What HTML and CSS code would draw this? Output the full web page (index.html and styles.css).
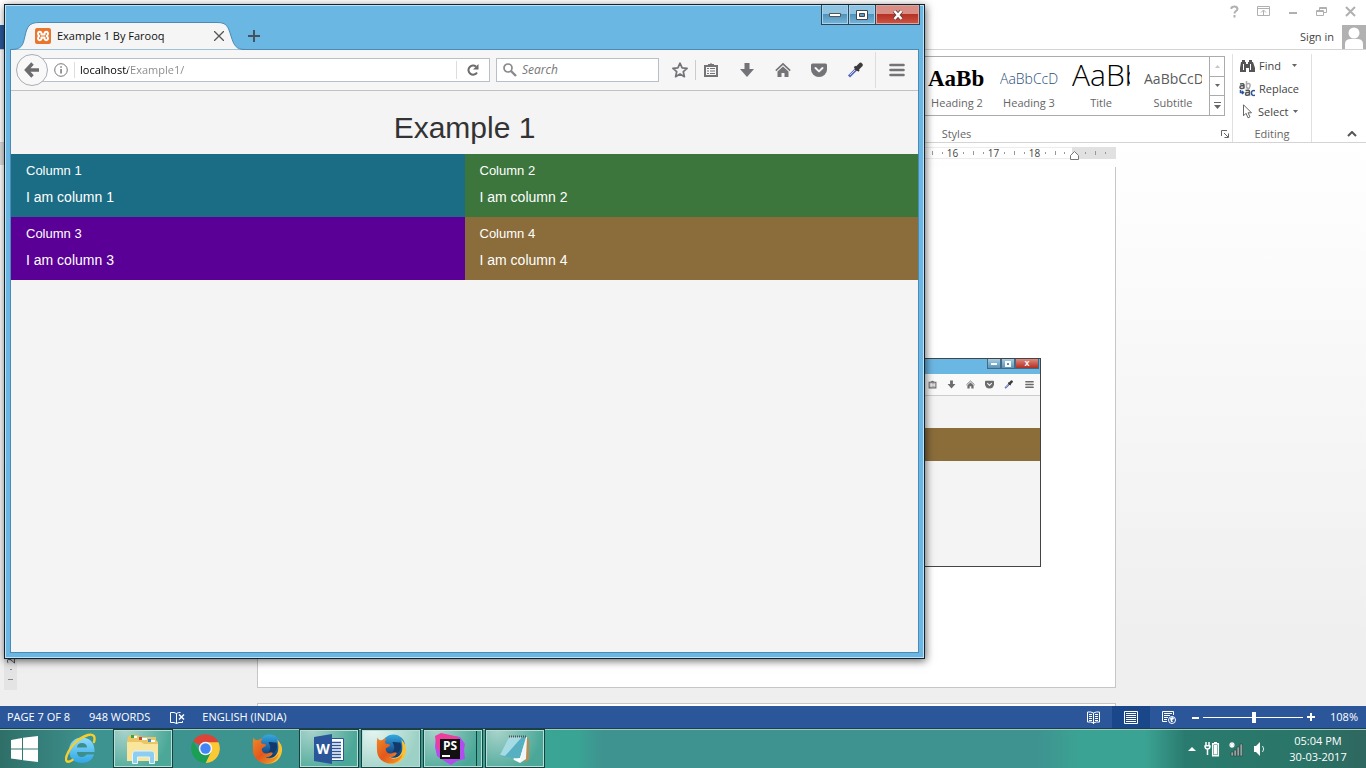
FILE: index.html
```html
<!DOCTYPE html>
<html lang="en">
<head>
<meta charset="UTF-8">
<meta name="viewport" content="width=device-width, initial-scale=1.0">
<title>Example 1 By Farooq</title>
<link rel="stylesheet" href="styles.css">
</head>
<body>
<!-- shared icons -->
<svg class="defs" width="0" height="0">
  <defs>
    <symbol id="i-list" viewBox="0 0 16 16"><path fill="none" stroke="currentColor" stroke-width="2" d="M2 4h12v10H2z"/><path fill="currentColor" d="M5 4V2h2l1-1 1 1h2v2zM4 6h2v1H4zm3 0h5v1H7zM4 8.500h2v1H4zm3 0h5v1H7zM4 11h2v1H4zm3 0h5v1H7z"/></symbol>
    <symbol id="i-down" viewBox="0 0 16 16"><path fill="currentColor" d="M5.500 1h5v6H15l-7 8-7-8h4.500z"/></symbol>
    <symbol id="i-home" viewBox="0 0 16 16"><path fill="none" stroke="currentColor" stroke-width="1.600" d="M.8 8.600L8 1.800l7.200 6.800"/><path fill="currentColor" d="M8 4.500l5.500 5V15h-4v-4h-3v4h-4V9.500z"/></symbol>
    <symbol id="i-pocket" viewBox="0 0 16 16"><path fill="currentColor" d="M1.500 1.500h13Q16 1.500 16 3v4.500a8 7.500 0 0 1-16 0V3q0-1.500 1.500-1.500z"/><path fill="none" stroke="#f5f5f5" stroke-width="2" stroke-linecap="round" stroke-linejoin="round" d="M4.500 6L8 9.400 11.500 6"/></symbol>
    <symbol id="i-dropper" viewBox="0 0 16 16"><path d="M2 14.500L9.500 7" stroke="#5a68b8" stroke-width="3"/><path d="M3 13l6.500-6.500" stroke="#c9d2f5" stroke-width="1"/><path d="M7.500 4.500l4.500 4.500" stroke="#333" stroke-width="2"/><path d="M10 6.500l3.500-3.500" stroke="#3b3b3b" stroke-width="4.500" stroke-linecap="round"/></symbol>
    <symbol id="i-menu" viewBox="0 0 16 16"><path stroke="currentColor" stroke-width="2.600" stroke-linecap="round" d="M1.500 3h13M1.500 8h13M1.500 13h13"/></symbol>
    <linearGradient id="fox" x1="0" y1="0" x2="1" y2="1"><stop offset="0" stop-color="#ef8a25"/><stop offset=".5" stop-color="#e4571c"/><stop offset="1" stop-color="#f6a327"/></linearGradient>
    <linearGradient id="globe" x1="0" y1="0" x2="0" y2="1"><stop offset="0" stop-color="#35a9e0"/><stop offset=".6" stop-color="#1c5f9f"/><stop offset="1" stop-color="#123567"/></linearGradient>
    <linearGradient id="ie" x1="0" y1="0" x2="0" y2="1"><stop offset="0" stop-color="#8edcfb"/><stop offset="1" stop-color="#2fa6e6"/></linearGradient>
    <symbol id="i-firefox" viewBox="0 0 32 32">
      <circle cx="18" cy="13" r="12" fill="url(#globe)"/>
      <path fill="#133a6c" d="M17 9c3-1 5 1 8 0 2 4 1 9-3 11l-5-1c3-3 2-6 0-10z"/>
      <path fill="#f8c234" d="M26 6c4 4 5.500 8 5 12-1 8-7 13-14 13-5 0-9-2-12-6l9 1c7 1 12-3 13-9 .5-4 0-7-1-11z"/>
      <path fill="url(#fox)" d="M1.500 4c1 2 2 3 4 3 2-1 4-1.500 6-1.500-2 1.500-2.500 3-2 4.500 1 1 4 .5 5 1.500 0 2-3 2.500-4.500 4 0 4 3 6 6.500 5 2-.5 3-1.500 5-.5-1 3-4 5-8 4 4 4 11 2 14-3-1 6-6 10-12 10C7 31 1 25 1 17c0-5-.5-9 .5-13z"/>
    </symbol>
  </defs>
</svg>

<div class="desktop">
  <!-- word processor -->
  <section class="word">
    <div class="word-title">
      <button aria-label="Help"><svg width="11" height="13" viewBox="0 0 11 13"><path fill="none" stroke="currentColor" stroke-width="2" d="M2.500 4V2.500Q3 1.500 5.500 1.500t3 2.500q0 1-1.500 2T5.500 8.500M5.500 10v2.500"/></svg></button>
      <button aria-label="Ribbon display options"><svg width="13" height="12" viewBox="0 0 13 12"><path fill="none" stroke="currentColor" d="M.5 1.500h12v9H.5zM.5 3.500h12M6.500 10V5.500M4 7.500L6.500 5 9 7.500"/></svg></button>
      <button aria-label="Minimize"><svg width="10" height="12" viewBox="0 0 10 12"><path stroke="currentColor" stroke-width="2" d="M1 8h8"/></svg></button>
      <button aria-label="Restore"><svg width="11" height="11" viewBox="0 0 11 11"><path fill="none" stroke="currentColor" d="M.5 4.500h7v5h-7zM.5 5.500h7M3.500 4V1.500h7v5H8M3.500 2.500h7"/></svg></button>
      <button aria-label="Close"><svg width="11" height="11" viewBox="0 0 11 11"><path stroke="currentColor" stroke-width="2" d="M1 1l9 9M10 1l-9 9"/></svg></button>
    </div>
    <div class="word-tabs">
      <span class="file-tab"></span>
      <a class="sign-in" href="#">Sign in</a>
      <svg class="avatar" width="24" height="24" viewBox="0 0 24 24"><path fill="#b1b1b1" d="M0 0h24v24H0z"/><circle cx="12" cy="8" r="5.500" fill="#fff"/><path fill="#fff" d="M3 24v-5q0-5 6-5h6q6 0 6 5v5z"/></svg>
    </div>
    <div class="ribbon">
      <div class="group styles-group">
        <div class="gallery">
          <button class="style-item"><span class="sample sample-h2">AaBb</span>Heading 2</button>
          <button class="style-item"><span class="sample sample-h3">AaBbCcD</span>Heading 3</button>
          <button class="style-item"><span class="sample sample-title">AaBb</span>Title</button>
          <button class="style-item"><span class="sample sample-sub">AaBbCcD</span>Subtitle</button>
          <div class="gallery-nav">
            <button aria-label="Previous row" class="off"><svg width="7" height="4" viewBox="0 0 7 4"><path fill="currentColor" d="M1 4l2.500-3L6 4z"/></svg></button>
            <button aria-label="Next row"><svg width="7" height="4" viewBox="0 0 7 4"><path fill="currentColor" d="M1 0l2.500 3L6 0z"/></svg></button>
            <button aria-label="More"><svg width="7" height="8" viewBox="0 0 7 8"><path fill="currentColor" d="M0 0h7v1H0zM0 3h7L3.500 7z"/></svg></button>
          </div>
        </div>
        <div class="group-label">Styles
          <svg class="launcher" width="8" height="8" viewBox="0 0 8 8"><path fill="none" stroke="#666" d="M.5 6V.5H6M3 3l4 4M7.500 3.500v4h-4"/></svg>
        </div>
      </div>
      <div class="group edit-group">
        <div class="commands">
          <button><svg width="16" height="14" viewBox="0 0 16 14"><path fill="#555" d="M3 1h3v2h1v2h2V3h1V1h3v2h1l2 6v4h-6V9H7v4H1V9l1-6h1z"/><path stroke="#fff" d="M4.500 5v6M11.500 5v6"/></svg>Find <svg class="drop" width="7" height="4" viewBox="0 0 7 4"><path fill="#666" d="M1 0h5L3.500 3z"/></svg></button>
          <button><svg width="16" height="16" viewBox="0 0 16 16"><g fill="none" stroke-width="1.500"><path stroke="#555" d="M1 3q4-1 4 1v3.500M5 4.800H2.500q-1.500 0-1.500 1.500t2 1.200q2 0 2-1.500"/><path stroke="#aaa" d="M7.500 0v7.500M7.500 4q0-1.500 2-1.500T11 5t-1.500 2.500-2-1.500"/><path stroke="#555" d="M6.500 9.500q4-1 4 1v4M10.500 11.500H8q-1.500 0-1.500 1.500t2 1.200q2 0 2-1.500"/><path stroke="#2b579a" d="M16 9.700q-3.500-.7-3.500 2.300t3.500 2.300M1.500 9v2.500h3M3 10l1.500 1.500L3 13"/></g></svg>Replace</button>
          <button><svg width="16" height="15" viewBox="0 0 16 15"><path fill="#fff" stroke="#666" d="M4.500.8v11l2.500-2.500 2 4.500 2-1-2-4h3.500z"/></svg>Select<svg class="drop" width="7" height="4" viewBox="0 0 7 4"><path fill="#666" d="M1 0h5L3.500 3z"/></svg></button>
        </div>
        <div class="group-label">Editing</div>
      </div>
      <button class="collapse" aria-label="Collapse the ribbon"><svg width="10" height="6" viewBox="0 0 10 6"><path fill="none" stroke="#555" stroke-width="2" d="M1 5l4-4 4 4"/></svg></button>
    </div>

    <div class="workspace">
      <div class="side-ruler">
        <span class="corner"></span>
        <div class="side-scale"><span>2</span><i class="dot"></i><i class="dash"></i></div>
      </div>
      <div class="pages">
        <div class="ruler">
          <div class="ruler-scale">
            <span>16</span><span>17</span><span>18</span>
          </div>
          <div class="ruler-end"><i></i><i></i><i></i></div>
          <svg class="indent" width="9" height="9" viewBox="0 0 9 9"><path fill="#fff" stroke="#777" d="M.5 4.500l4-4 4 4v4h-8z"/></svg>
        </div>
        <div class="page">
          <div class="figure">
            <div class="figure-title"><span></span><span></span><span class="red">x</span></div>
            <div class="figure-bar">
              <svg><use href="#i-list"/></svg><svg><use href="#i-down"/></svg><svg><use href="#i-home"/></svg><svg><use href="#i-pocket"/></svg><svg><use href="#i-dropper"/></svg><svg class="figure-menu"><use href="#i-menu"/></svg>
            </div>
            <div class="figure-band"></div>
          </div>
        </div>
        <div class="page next"></div>
      </div>
    </div>

    <div class="status">
      <span class="pages-count">PAGE 7 OF 8</span>
      <span>948 WORDS</span>
      <svg class="proof" width="15" height="13" viewBox="0 0 15 13"><path fill="none" stroke="#fff" d="M6.500 2.500q-2-1.500-6-1v10q4-.5 6 1zV13M6.500 2.500q1.500-1.300 4-1M6.500 12.500q2-1.500 6-1V10"/><path stroke="#fff" stroke-width="1.500" d="M9 3.500l5 5M14 3.500l-5 5"/></svg>
      <span>ENGLISH (INDIA)</span>
      <div class="views">
        <button aria-label="Read mode"><svg width="13" height="13" viewBox="0 0 13 13"><path fill="none" stroke="#fff" d="M6.500 2Q4 .5.500 1v10q3.500-.5 6 1 2.500-1.500 6-1V1Q9 .5 6.500 2zV13M2 3.500h3M2 5.500h3M2 7.500h3M2 9.500h3M8 3.500h3M8 5.500h3M8 7.500h3M8 9.500h3"/></svg></button>
        <button class="on" aria-label="Print layout"><svg width="14" height="13" viewBox="0 0 14 13"><path fill="none" stroke="#fff" d="M.5.500h13v12H.5zM2 2.500h10M2 4.500h10M2 6.500h10M2 8.500h10M2 10.500h10"/></svg></button>
        <button aria-label="Web layout"><svg width="14" height="13" viewBox="0 0 14 13"><path fill="none" stroke="#fff" d="M11.500 4V.5H.5v10H5M2 2.500h8M2 4.500h6M2 6.500h4M2 8.500h3"/><circle cx="10" cy="9" r="3.500" fill="#2b579a" stroke="#fff"/><path fill="#fff" d="M8 7l3-1 1 2-2 1 1 2H9z"/></svg></button>
      </div>
      <div class="zoomer">
        <svg width="7" height="9" viewBox="0 0 7 9"><path stroke="#fff" stroke-width="2" d="M0 5h7"/></svg>
        <input type="range" min="0" max="100" value="51" aria-label="Zoom level">
        <svg width="8" height="8" viewBox="0 0 8 8"><path stroke="#fff" stroke-width="2" d="M0 4h8M4 0v8"/></svg>
      </div>
      <span class="percent">108%</span>
    </div>
  </section>

  <!-- taskbar -->
  <nav class="taskbar">
    <button class="start" aria-label="Start"><svg width="27" height="26" viewBox="0 0 27 26"><path fill="#fff" d="M0 4l11-2v10.500H0zM12 1.800L27 0v12.500H12zM0 13.500h11V24L0 22.500zM12 13.500h15V26l-15-1.800z"/></svg></button>
    <button class="task" aria-label="Internet Explorer"><svg width="32" height="32" viewBox="0 0 32 32"><path fill="url(#ie)" fill-rule="evenodd" d="M17 4.500c7.500 0 12.500 5 12.500 13v1.500H12c0 3 2 5 5 5 2 0 3.500-1 4.500-2.500h7.500C27.500 26.500 23 30 17 30 9 30 4 24.500 4 17.500S9 4.500 17 4.500zM12 14.500h10c0-3-2-4.500-5-4.500s-5 1.500-5 4.500z"/><path fill="none" stroke="#f6cf2e" stroke-width="2.400" stroke-linecap="round" d="M7.500 27C2 30.500-.5 28.500 2 22 5 13.500 14 4.500 23 2c6-1.500 7.500 2 6 7"/></svg></button>
    <button class="task open" aria-label="File Explorer"><svg width="34" height="32" viewBox="0 0 34 32"><path fill="#e9c767" d="M2 4l2-2h8l2 2h16v3l2 2v18H1V8z"/><path fill="#fff" d="M5 3h6v2H5zM14 5h7v2h-7zM22 7h7v2h-7z"/><path fill="#3da639" d="M5 2h3v3H5z"/><path fill="#d4472d" d="M13 4h3v3h-3z"/><path fill="#3b8fd0" d="M22 6h3v3h-3z"/><path fill="#fae59c" d="M1 9h14l3 2h14v17H1z"/><path fill="#8dcdf0" stroke="#dff5ff" d="M6.500 30.500V20l2-2h18l2 2v10.500h-5V24h-12v6.500z"/></svg></button>
    <button class="task" aria-label="Chrome"><svg width="29" height="29" viewBox="0 0 28 28"><path fill="#db4437" d="M14 14L2 7a14 14 0 0 1 24.500 1z"/><path fill="#fcc934" d="M14 14V8h12.500A14 14 0 0 1 14 28l5-11z"/><path fill="#1a9f55" d="M14 14l5 4-5 10A14 14 0 0 1 2 7l6 10z"/><circle cx="14" cy="14" r="6.500" fill="#f4f4f4"/><circle cx="14" cy="14" r="5" fill="#4385f4"/></svg></button>
    <button class="task" aria-label="Firefox"><svg width="31" height="32"><use href="#i-firefox"/></svg></button>
    <button class="task open" aria-label="Word"><svg width="30" height="30" viewBox="0 0 30 30"><path fill="#fff" stroke="#2b579a" d="M14 4.500h15.500v22H14z"/><path stroke="#2b579a" stroke-width="1.500" d="M18 8.500h9M18 11.500h9M18 14.500h9M18 17.500h9M18 20.500h9M18 23.500h9"/><path fill="#2b579a" d="M0 3l18-3v30L0 27z"/><text x="9" y="20" text-anchor="middle" font-size="14" class="logo-text">W</text></svg></button>
    <button class="task open active" aria-label="Firefox window"><svg width="31" height="32"><use href="#i-firefox"/></svg></button>
    <button class="task open stacked" aria-label="PhpStorm"><svg width="32" height="32" viewBox="0 0 32 32"><path fill="#b14df0" d="M2 3l10-1 14 2 5 7-1 6 1 9-8 2-6 4-10-6-4-3-2-9z"/><path fill="#ee3d9c" d="M1 3l6-3 9 2 9 2-8 8-9 10-5-7z"/><path fill="#111" d="M6 6h20v20H6z"/><path fill="#fff" d="M8 22h8v2H8z"/><text x="16" y="17" text-anchor="middle" font-size="12" class="logo-text">PS</text></svg></button>
    <button class="task open" aria-label="Notepad"><svg width="34" height="32" viewBox="0 0 34 32"><path fill="#b98c52" d="M28 4l3 2v20l-4 4z"/><path fill="#f0f5f5" d="M11 4h18l-1 22-6 4-6-3z"/><path fill="#57b0c2" d="M11 4h17l-6 22-20-3z"/><path fill="#a6dbe4" d="M11 4h13L7 23l-5-1z"/><path fill="#fff" d="M27 8l-5 21-7-3 7-1z"/><path stroke="#555" stroke-dasharray="1 1" stroke-width="2" d="M11 3.500h18"/></svg></button>
    <div class="tray">
      <svg width="8" height="5" viewBox="0 0 8 5"><path fill="#fff" d="M0 5l4-4 4 4z"/></svg>
      <svg width="16" height="16" viewBox="0 0 16 16"><path fill="none" stroke="#fff" stroke-width="1.500" d="M2 1v3M5 1v3M.5 4.700h6M1 5q0 3 2.500 3T6 5M3.500 8v6"/><path fill="#2a7568" stroke="#fff" stroke-width="1.500" d="M8.700 2.700h5.600v12H8.700z"/><path fill="#fff" d="M10 4h3v9.500h-3zM10 1h3v1h-3z"/></svg>
      <svg width="16" height="16" viewBox="0 0 16 16"><path fill="#8fa5a1" stroke="#33423f" stroke-width=".6" d="M3 11h2.500v4H3zM6 9h2.500v6H6zM9 6h2.500v9H9zM12 3h2.500v12H12z"/><path stroke="#fff" stroke-width="1.200" d="M4 1v6M1 4h6M2 2l4 4M6 2L2 6"/></svg>
      <svg width="16" height="16" viewBox="0 0 16 16"><path fill="#fff" d="M2 5h2l4-4v14l-4-4H2z"/><path fill="none" stroke="#dff0ed" d="M10.500 5q2.500 3 0 6"/></svg>
    </div>
    <div class="clock"><span>05:04 PM</span><span>30-03-2017</span></div>
  </nav>

  <!-- browser window -->
  <main class="browser">
    <div class="win-buttons">
      <button aria-label="Minimize window"><svg width="12" height="6" viewBox="0 0 12 6"><path fill="#fff" stroke="#555" d="M.5 1.500h11v3H.5z"/></svg></button>
      <button aria-label="Maximize window"><svg width="12" height="10" viewBox="0 0 12 10"><path fill="#fff" stroke="#445" d="M.5.500h11v9H.5z"/><path fill="#5f9dc6" stroke="#445" d="M3.500 3.500h5v3h-5z"/></svg></button>
      <button class="shut" aria-label="Close window"><svg width="12" height="10" viewBox="0 0 12 10"><path stroke="#5d3a3a" stroke-width="4" d="M2.500 1l7 8M9.500 1l-7 8"/><path stroke="#fff" stroke-width="2.500" d="M2.500 1l7 8M9.500 1l-7 8"/></svg></button>
    </div>
    <div class="tabs">
      <div class="tab">
        <svg class="tab-shape" width="234" height="28" viewBox="0 0 234 28"><path fill="#f5f5f5" stroke="#4a8ab5" d="M0 27.500C11 27.500 12 23 14 14S18 .5 28 .5h178c10 0 11 4 14 13.500s5 13.500 14 13.500"/></svg>
        <svg width="16" height="16" viewBox="0 0 16 16"><rect width="16" height="16" rx="2" fill="#e8762d"/><path fill="none" stroke="#fff" stroke-width="2" stroke-linejoin="round" d="M6.500 6.400V5.200A1.800 1.800 0 0 0 3 5.200Q3 7 4.200 8 3 9 3 10.800A1.800 1.800 0 0 0 6.500 10.800V9.600h3v1.200A1.800 1.800 0 0 0 13 10.800Q13 9 11.800 8 13 7 13 5.200A1.800 1.800 0 0 0 9.500 5.200v1.200z"/></svg>
        <span>Example 1 By Farooq</span>
        <button aria-label="Close tab"><svg width="10" height="10" viewBox="0 0 10 10"><path stroke="#555" stroke-width="1.300" d="M0 0l10 10M10 0L0 10"/></svg></button>
      </div>
      <button class="new-tab" aria-label="New tab"><svg width="12" height="12" viewBox="0 0 12 12"><path stroke="#44545f" stroke-width="2" d="M0 6h12M6 0v12"/></svg></button>
    </div>
    <div class="client">
      <div class="toolbar">
        <button class="back" aria-label="Back"><svg width="16" height="16" viewBox="0 0 16 16"><path fill="none" stroke="#6c6c6f" stroke-width="3.400" d="M8.500 1.500L2.500 8l6 6.500M3 8h12"/></svg></button>
        <div class="url">
          <svg width="14" height="14" viewBox="0 0 14 14"><circle cx="7" cy="7" r="6.300" fill="none" stroke="#777"/><path fill="#777" d="M6.300 6h1.500v4.500H6.300zM6.300 3.200h1.500v1.500H6.300z"/></svg>
          <input type="text" value="localhost/Example1/" aria-label="Address">
          <button aria-label="Reload"><svg width="12" height="12" viewBox="0 0 12 12"><path fill="none" stroke="#6c6c6f" stroke-width="2" d="M10 8.500A4.600 4.600 0 1 1 9 2.500"/><path fill="#6c6c6f" d="M11.500 0v5.500H6z"/></svg></button>
        </div>
        <div class="search">
          <svg width="14" height="14" viewBox="0 0 14 14"><circle cx="5" cy="5" r="4" fill="none" stroke="#8a8a8a" stroke-width="1.700"/><path stroke="#8a8a8a" stroke-width="2.400" d="M8 8l5 5"/></svg>
          <input type="text" placeholder="Search" aria-label="Search">
        </div>
        <div class="tools">
          <button class="star" aria-label="Bookmark"><svg width="16" height="16" viewBox="0 0 16 16"><path fill="none" stroke="currentColor" stroke-width="1.700" stroke-linejoin="round" d="M8 1.200l2.100 4.600 5 .5-3.800 3.400 1.100 5L8 12.100l-4.400 2.600 1.100-5L.9 6.300l5-.5z"/></svg></button>
          <button aria-label="Bookmarks list"><svg><use href="#i-list"/></svg></button>
          <button aria-label="Downloads"><svg><use href="#i-down"/></svg></button>
          <button aria-label="Home"><svg><use href="#i-home"/></svg></button>
          <button aria-label="Pocket"><svg><use href="#i-pocket"/></svg></button>
          <button aria-label="Eyedropper"><svg><use href="#i-dropper"/></svg></button>
          <button class="menu" aria-label="Menu"><svg><use href="#i-menu"/></svg></button>
        </div>
      </div>
      <div class="content">
        <h2>Example 1</h2>
        <div class="columns">
          <div class="col col1"><h3>Column 1</h3><p>I am column 1</p></div>
          <div class="col col2"><h3>Column 2</h3><p>I am column 2</p></div>
          <div class="col col3"><h3>Column 3</h3><p>I am column 3</p></div>
          <div class="col col4"><h3>Column 4</h3><p>I am column 4</p></div>
        </div>
      </div>
    </div>
  </main>
</div>
</body>
</html>
```

FILE: styles.css
```css
* {
  box-sizing: border-box;
}
body {
  margin: 0;
  overflow: hidden;
  font-family: "Open Sans", "Noto Sans", sans-serif;
  font-size: 11px;
  line-height: 16px;
  color: #444;
}
button {
  display: flex;
  align-items: center;
  justify-content: center;
  margin: 0;
  padding: 0;
  border: 0;
  background: none;
  font: inherit;
  color: inherit;
}
svg {
  display: block;
  flex-shrink: 0;
}
input {
  min-width: 0;
  margin: 0;
  padding: 0;
  border: 0;
  outline: 0;
  background: none;
  font: inherit;
}
.defs { position: absolute; }
.desktop {
  position: relative;
  display: flex;
  flex-direction: column;
  height: 100vh;
}

/* word processor */
.word {
  flex: 1;
  min-height: 0;
  display: flex;
  flex-direction: column;
  background: #fff;
}
.word-title {
  display: flex;
  justify-content: flex-end;
  height: 25px;
  padding-right: 1px;
  color: #b0b0b0;
}
.word-title button { width: 29px; height: 22px; }
.word-tabs {
  display: flex;
  align-items: center;
  height: 25px;
  border-bottom: 1px solid #d4d4d4;
}
.file-tab {
  width: 56px;
  height: 24px;
  background: #2b579a;
}
.sign-in {
  margin-left: auto;
  margin-right: 8px;
  color: #444;
  text-decoration: none;
}
.ribbon {
  display: flex;
  justify-content: flex-end;
  height: 93px;
  padding-top: 4px;
  border-bottom: 1px solid #d4d4d4;
}
.group {
  display: flex;
  flex-direction: column;
  justify-content: space-between;
  border-right: 1px solid #e1e1e1;
}
.styles-group { width: 550px; padding: 2px 7px 0 5px; }
.gallery {
  display: flex;
  justify-content: flex-end;
  height: 60px;
  border: 1px solid #ababab;
}
.style-item {
  flex-direction: column;
  justify-content: flex-end;
  width: 72px;
  padding-bottom: 4px;
  color: #666;
}
.sample {
  display: flex;
  align-items: center;
  width: 58px;
  height: 28px;
  margin-bottom: 2px;
  overflow: hidden;
}
.sample-h2 {
  font: bold 23px "Liberation Serif", serif;
  color: #000;
}
.sample-h3 {
  font-size: 14px;
  font-weight: 300;
  color: #1f4d78;
}
.sample-title {
  align-items: flex-start;
  font-size: 30px;
  font-weight: 300;
  line-height: 20px;
  color: #000;
}
.sample-sub {
  font-size: 14px;
  color: #5a5a5a;
}
.gallery-nav {
  display: flex;
  flex-direction: column;
  width: 15px;
  border-left: 1px solid #ababab;
  color: #666;
}
.gallery-nav button { flex: 1; }
.gallery-nav button + button { border-top: 1px solid #ababab; }
.gallery-nav .off { color: #c6c6c6; }
.group-label {
  position: relative;
  text-align: center;
  color: #666;
}
.launcher {
  position: absolute;
  right: -4px;
  bottom: 4px;
}
.edit-group { width: 79px; }
.commands button {
  height: 23px;
  padding-left: 6px;
  gap: 4px;
}
.commands .drop { margin-left: 6px; }
.commands button:last-child { gap: 3px; }
.commands button:last-child .drop { margin-left: 1px; }
.collapse {
  align-self: flex-end;
  width: 54px;
  height: 16px;
  padding-left: 26px;
}

.workspace {
  flex: 1;
  min-height: 0;
  display: flex;
  background: linear-gradient(#fff, #efefef 500px);
}
.side-ruler {
  display: flex;
  flex-direction: column;
  width: 17px;
}
.corner {
  height: 22px;
  background: #dcdcdc;
}
.side-scale {
  flex: 1;
  display: flex;
  flex-direction: column;
  align-items: center;
  justify-content: flex-end;
  gap: 9px;
  margin: 0 0 16px 4px;
  padding-bottom: 10px;
  background: #e4e4e4;
  font-size: 10px;
  line-height: 12px;
}
.side-scale span {
  margin-bottom: -4px;
  writing-mode: vertical-rl;
  transform: rotate(180deg);
}
.side-scale i { height: 1px; background: #888; }
.dot { width: 2px; }
.dash { width: 5px; }
.pages {
  flex: 1;
  display: flex;
  flex-direction: column;
  align-items: center;
  padding: 4px 10px 0 0;
}
.ruler {
  position: relative;
  display: flex;
  width: 859px;
  height: 12px;
  margin-bottom: 8px;
  font-size: 10px;
  line-height: 12px;
}
.ruler-scale {
  flex: 1;
  display: flex;
  justify-content: flex-end;
  padding-right: 17px;
  box-shadow: inset 0 1px #ececec, inset 0 -1px #ececec;
  background: linear-gradient(#999, #999) right 16px top 4px / 1px 4px no-repeat, linear-gradient(#999, #999) right 7px top 5px / 1px 2px no-repeat, #fff;
}
.ruler-scale span {
  width: 41px;
  text-align: center;
  background: linear-gradient(#999, #999) 0 4px / 1px 4px no-repeat, linear-gradient(#999, #999) 10px 5px / 1px 2px no-repeat, linear-gradient(#999, #999) 31px 5px / 1px 2px no-repeat;
}
.ruler-end {
  display: flex;
  align-items: center;
  gap: 9px;
  width: 44px;
  padding-left: 13px;
  background: #e1e1e1;
}
.ruler-end i {
  width: 1px;
  height: 2px;
  background: #999;
}
.ruler-end i:nth-child(2) { height: 4px; }
.indent {
  position: absolute;
  right: 37px;
  bottom: -1px;
}
.page {
  width: 859px;
  flex: 1;
  display: flex;
  justify-content: flex-end;
  align-items: flex-start;
  padding: 191px 74px 0 0;
  border: 1px solid #c6c6c6;
  border-top: 0;
  background: #fff;
}
.page.next {
  flex: none;
  height: 3px;
  margin-top: 15px;
  padding: 0;
  border: 1px solid #c6c6c6;
  border-bottom: 0;
}
.figure {
  width: 600px;
  height: 209px;
  border: 1px solid #444;
  background: #f4f4f4;
}
.figure-title {
  display: flex;
  justify-content: flex-end;
  height: 15px;
  padding-right: 1px;
  background: #6bb7e4;
}
.figure-title span {
  width: 14px;
  height: 10px;
  border: 1px solid #47687e;
  border-top: 0;
  background: linear-gradient(#a5cde5, #5a94b8);
  font: bold 9px/8px "Liberation Sans", sans-serif;
  text-align: center;
  color: #fff;
}
.figure-title span:first-child {
  background: linear-gradient(#fff, #fff) center / 6px 2px no-repeat, linear-gradient(#a5cde5, #5a94b8);
}
.figure-title span:nth-child(2) {
  background: linear-gradient(#5a94b8, #5a94b8) center / 2px 2px no-repeat, linear-gradient(#fff, #fff) center / 6px 6px no-repeat, linear-gradient(#a5cde5, #5a94b8);
}
.figure-title .red { width: 24px; background: linear-gradient(#dd8a80, #b52e20); }
.figure-bar {
  display: flex;
  align-items: center;
  justify-content: flex-end;
  gap: 10px;
  height: 22px;
  padding-right: 6px;
  border-bottom: 1px solid #ccc;
  background: #f9f9f9;
  color: #6c6c6f;
}
.figure-bar svg { width: 9px; height: 9px; }
.figure-bar .figure-menu { margin-left: 2px; }
.figure-band {
  height: 33px;
  margin-top: 32px;
  background: #8b6d3a;
}

.status {
  display: flex;
  align-items: center;
  height: 22px;
  padding: 0 8px 0 7px;
  background: #2b579a;
  color: #fff;
}
.pages-count { margin-right: 19px; }
.proof { margin: 0 17px 0 20px; }
.views { display: flex; margin-left: auto; }
.views button { width: 38px; height: 22px; }
.views .on { background: #19478a; }
.zoomer {
  display: flex;
  align-items: center;
  gap: 4px;
  margin: 0 15px 0 4px;
}
.zoomer input {
  width: 100px;
  height: 11px;
  appearance: none;
  background: linear-gradient(#fff, #fff) center / 100% 1px no-repeat;
}
.zoomer input::-webkit-slider-thumb {
  appearance: none;
  width: 4px;
  height: 11px;
  background: #fff;
}

/* taskbar */
.taskbar {
  display: flex;
  gap: 2px;
  height: 40px;
  border-top: 1px solid #1d3f4c;
  box-shadow: inset 0 1px #9ccbc5;
  background: linear-gradient(90deg, #2e6f68 0, #37817c 48px, #3d938f 90px, #3d948f 330px, #3aa594 540px, #3aa494 577px, #3e9390 602px, #3e9390 1038px, #3ba393 1080px, #3ba393 1145px, #2a7b6f 1185px, #2a7568 1300px, #2f675f 1366px);
  color: #fff;
}
.start { width: 49px; }
.task { width: 60px; }
.open {
  border: 1px solid #17403e;
  box-shadow: inset 0 0 0 1px #b9ddd7;
  background: radial-gradient(circle at 20% 0, #a9d3cb, #4ba898 75%);
}
.active { background: radial-gradient(circle at 20% 0, #e6f5f2, #9dd1c5 75%); }
.stacked {
  padding-right: 6px;
  box-shadow: inset 0 0 0 1px #b9ddd7, inset -5px 0 #4ba898, inset -6px 0 #17403e;
}
.logo-text {
  fill: #fff;
  font-family: "Open Sans", sans-serif;
  font-weight: bold;
}
.tray {
  display: flex;
  align-items: center;
  gap: 8px;
  margin-left: auto;
}
.clock {
  display: flex;
  flex-direction: column;
  justify-content: center;
  width: 96px;
  text-align: center;
}

/* browser window */
.browser {
  position: absolute;
  left: 4px;
  top: 4px;
  display: flex;
  flex-direction: column;
  width: 921px;
  height: 655px;
  padding: 0 5px 5px;
  border: 1px solid #10222e;
  box-shadow: inset 0 0 0 1px #bfe2f6, 1px 2px 8px rgba(0, 0, 0, .6);
  background: #6bb7e4;
}
.win-buttons {
  display: flex;
  align-self: flex-end;
  height: 20px;
  margin-right: -1px;
}
.win-buttons button {
  width: 27px;
  border: 1px solid #2c4658;
  border-top: 0;
  border-right: 0;
  box-shadow: inset 0 0 0 1px #a7d3ec;
  background: linear-gradient(#8fc3e2 45%, #4f93bd 50%, #79b5d9);
}
.win-buttons .shut {
  width: 45px;
  border-right: 1px solid #2c4658;
  box-shadow: inset 0 0 0 1px #dfa49d;
  background: linear-gradient(#d98e85 45%, #b53224 50%, #cc5547);
}
.tabs {
  display: flex;
  align-items: flex-start;
  height: 24px;
}
.tab {
  position: relative;
  z-index: 1;
  display: flex;
  align-items: center;
  gap: 6px;
  width: 235px;
  height: 28px;
  margin-top: -3px;
  padding: 0 21px 0 25px;
  color: #111;
}
.tab-shape {
  position: absolute;
  left: 1px;
  top: 0;
}
.tab > * { z-index: 1; }
.tab .tab-shape { z-index: 0; }
.tab button { margin-left: auto; }
.new-tab { width: 18px; height: 22px; }
.client {
  flex: 1;
  display: flex;
  flex-direction: column;
  border: 1px solid #4a8ab5;
  background: #f4f4f4;
}
.toolbar {
  display: flex;
  align-items: center;
  height: 41px;
  padding-left: 5px;
  border-bottom: 1px solid #c0c1c4;
  background: #f6f6f6;
  color: #737378;
}
.back {
  z-index: 1;
  width: 32px;
  height: 32px;
  margin-right: -16px;
  border: 1px solid #a9adb3;
  border-radius: 50%;
  background: #f8f8f8;
}
.url, .search {
  display: flex;
  align-items: center;
  height: 24px;
  border: 1px solid #b9bfc6;
  background: #fff;
}
.url { flex: 1; padding-left: 21px; }
.url input {
  flex: 1;
  margin-left: 6px;
  padding-left: 5px;
  border-left: 1px solid #ddd;
  background: linear-gradient(90deg, #000 53px, #888 53px) text;
  color: transparent;
}
.url button {
  width: 33px;
  height: 18px;
  border-left: 1px solid #ddd;
}
.search {
  gap: 5px;
  width: 163px;
  margin-left: 6px;
  padding-left: 6px;
}
.search input { flex: 1; font-size: 12px; }
.search input::placeholder { font-style: italic; color: #777; }
.tools { display: flex; align-items: center; }
.tools button { width: 36px; height: 20px; }
.tools button svg { width: 16px; height: 16px; }
.tools .star {
  width: 32px;
  margin: 0 -3px 0 5px;
  border-right: 1px solid #ccc;
}
.tools .menu {
  width: 43px;
  height: 36px;
  margin-left: 2px;
  border-left: 1px solid #ddd;
}
.content {
  font-family: "Liberation Sans", Arial, sans-serif;
  font-size: 14px;
  line-height: 20px;
}
.content h2 {
  margin: 20px 0 10px;
  font-size: 30px;
  font-weight: normal;
  line-height: 33px;
  text-align: center;
  color: #333;
}
.columns {
  display: grid;
  grid-template-columns: 1fr 1fr;
  color: #fff;
}
.col { padding: 9px 15px 10px; }
.col h3 {
  margin: 0 0 8px;
  font-size: 13px;
  font-weight: normal;
  line-height: 16px;
}
.col p { margin: 0; }
.col1 { background: #1b6d85; }
.col2 { background: #3c763d; }
.col3 { background: #5a0096; }
.col4 { background: #8b6d3b; }
```
